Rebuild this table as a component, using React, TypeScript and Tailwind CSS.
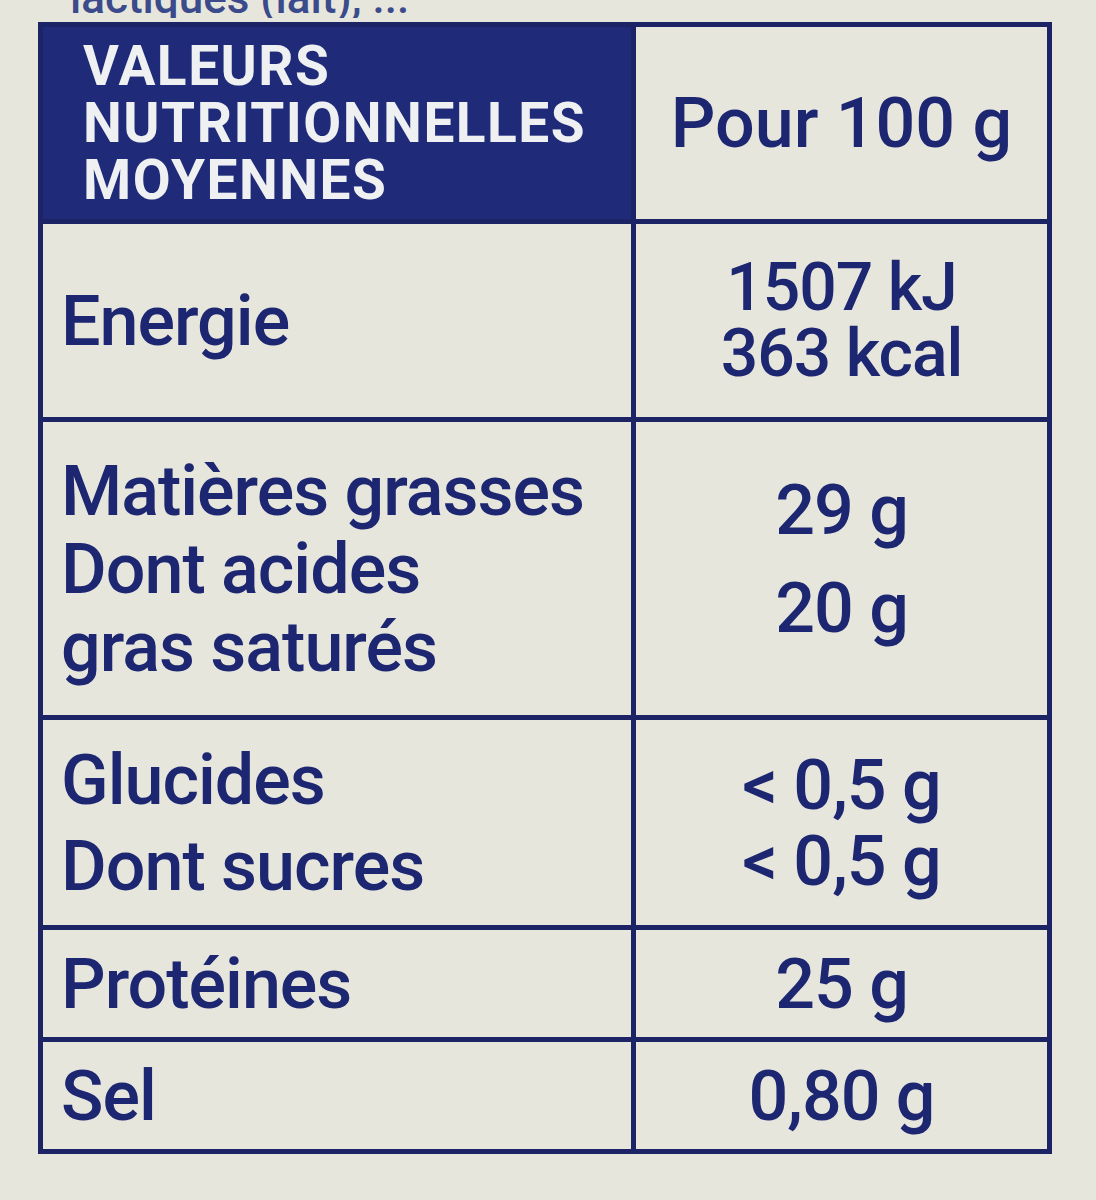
import React from "react";

const navy = "text-[#1d2670]";

function Row({
  left,
  right,
  h,
}: {
  left: React.ReactNode;
  right: React.ReactNode;
  h: string;
}) {
  return (
    <div className={`flex ${h} border-t-[5px] border-[#1c2466]`}>
      <div className="w-[593px] flex items-center pl-[18px] border-r-[5px] border-[#1c2466]">
        {left}
      </div>
      <div className="flex-1 flex items-center justify-center">{right}</div>
    </div>
  );
}

function Lines({ items, lh, cls = "" }: { items: string[]; lh: string; cls?: string }) {
  return (
    <div className={`flex flex-col ${cls}`}>
      {items.map((t, i) => (
        <div key={i} className={`${lh} whitespace-nowrap`}>
          {t}
        </div>
      ))}
    </div>
  );
}

export default function App() {
  return (
    <div
      className={`w-[1096px] h-[1200px] overflow-hidden bg-[#e6e6dd] ${navy}`}
      style={{ fontFamily: "Roboto, 'Liberation Sans', sans-serif" }}
    >
      <div className="h-[18px] overflow-hidden relative">
        <div className="absolute left-[70px] bottom-[-2px] text-[44px] leading-[44px] font-medium text-[#3a4a8a] whitespace-nowrap">
          lactiques (lait), ...
        </div>
      </div>
      <div className="ml-[38px] mt-[4px] w-[1014px] border-[5px] border-[#1c2466] text-[70px] font-medium tracking-[-1px]">
        {/* Header */}
        <div className="flex h-[192px]">
          <div className="w-[593px] bg-[#1f2b78] border-r-[5px] border-[#1c2466] flex items-center pl-[40px]">
            <Lines
              items={["VALEURS", "NUTRITIONNELLES", "MOYENNES"]}
              lh="h-[57px] leading-[57px]"
              cls="text-[55px] font-bold text-[#eef0f2] tracking-[1.5px]"
            />
          </div>
          <div className="flex-1 flex items-center justify-center">
            <div className="leading-[72px] tracking-[0px]">Pour 100 g</div>
          </div>
        </div>

        <Row
          h="h-[198px]"
          left={<div className="leading-[80px]">Energie</div>}
          right={
            <Lines
              items={["1507 kJ", "363 kcal"]}
              lh="h-[66px] leading-[66px]"
              cls="items-center text-[66px]"
            />
          }
        />

        <Row
          h="h-[298px]"
          left={
            <Lines
              items={["Matières grasses", "Dont acides", "gras saturés"]}
              lh="h-[78px] leading-[78px]"
            />
          }
          right={
            <div className="flex flex-col items-center">
              <div className="leading-[78px]">29 g</div>
              <div className="h-[117px] flex items-center leading-[78px]">20 g</div>
            </div>
          }
        />

        <Row
          h="h-[210px]"
          left={<Lines items={["Glucides", "Dont sucres"]} lh="h-[86px] leading-[86px]" />}
          right={
            <Lines
              items={["< 0,5 g", "< 0,5 g"]}
              lh="h-[76px] leading-[76px]"
              cls="items-center"
            />
          }
        />

        <Row
          h="h-[112px]"
          left={<div className="leading-[80px]">Protéines</div>}
          right={<div className="leading-[80px]">25 g</div>}
        />

        <Row
          h="h-[112px]"
          left={<div className="leading-[80px]">Sel</div>}
          right={<div className="leading-[80px]">0,80 g</div>}
        />
      </div>
    </div>
  );
}
